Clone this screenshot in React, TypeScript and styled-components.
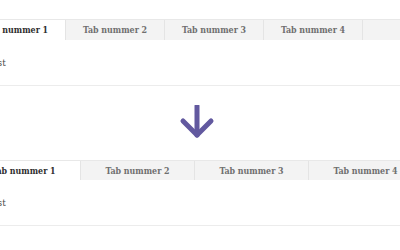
import styled, { createGlobalStyle } from 'styled-components';

const Global = createGlobalStyle`
	html, body {
		margin: 0;
		padding: 0;
		background: #fff;
		overflow: hidden;
	}
	body {
		font-family: "DejaVu Serif Condensed", "DejaVu Serif", "Liberation Serif", serif;
	}
`;

const Page = styled.div`
	width: 456px;
	margin-left: -33px;
	padding-top: 19px;
	display: flex;
	flex-direction: column;
`;

const Tabs = styled.div`
	border-bottom: 1px solid #ececec;
`;

const TabList = styled.div<{ $fill?: boolean }>`
	display: flex;
	height: ${p => (p.$fill ? '20px' : '21px')};
	background: #f3f3f3;
	border-top: 1px solid #e8e8e8;
	box-sizing: border-box;
`;

const Tab = styled.div<{ $active?: boolean; $fill?: boolean }>`
	display: flex;
	align-items: center;
	justify-content: center;
	box-sizing: border-box;
	width: ${p => (p.$fill ? '114px' : '99px')};
	border-right: 1px solid #e4e4e4;
	background: ${p => (p.$active ? '#fff' : '#f3f3f3')};
	color: ${p => (p.$active ? '#2e2e2e' : '#6f6f6f')};
	font-size: 8.8px;
	font-weight: bold;
	white-space: nowrap;
`;

const Panel = styled.div`
	height: 45px;
	padding-left: 20px;
	display: flex;
	align-items: center;
	font-size: 10px;
	color: #4a4a4a;
`;

const ArrowRow = styled.div`
	height: 74px;
	display: flex;
	align-items: center;
	justify-content: center;
	padding-left: 4px;
`;

const labels = ['Tab nummer 1', 'Tab nummer 2', 'Tab nummer 3', 'Tab nummer 4'];

const TabBox = ({ fill }: { fill?: boolean }) => (
	<Tabs>
		<TabList $fill={fill}>
			{labels.map((l, i) => (
				<Tab key={l} $active={i === 0} $fill={fill}>{l}</Tab>
			))}
		</TabList>
		<Panel>Test</Panel>
	</Tabs>
);

const App = () => (
	<>
		<Global />
		<Page>
			<TabBox />
			<ArrowRow>
				<svg width="36" height="36" viewBox="0 0 36 36" fill="none" stroke="#62599f" strokeWidth="5" strokeLinecap="round" strokeLinejoin="round">
					<path d="M18 1 V30" />
					<path d="M4 16 L18 30 L32 16" />
				</svg>
			</ArrowRow>
			<TabBox fill />
		</Page>
	</>
);

export default App;
